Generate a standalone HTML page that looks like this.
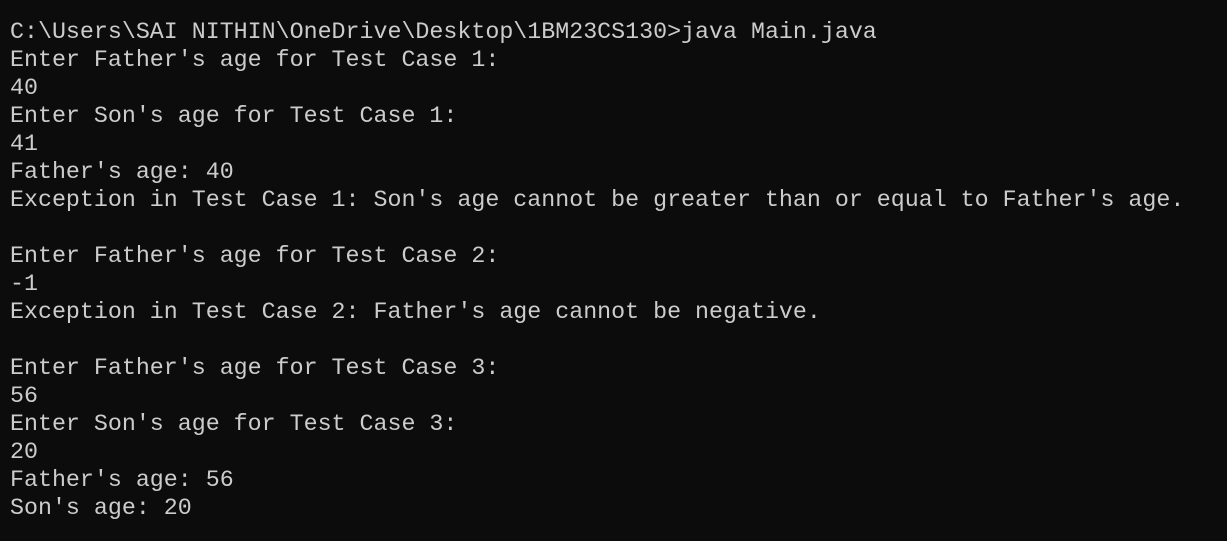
<!DOCTYPE html>
<html><head><meta charset="utf-8"><style>
html,body{margin:0;padding:0;background:#0c0c0c;width:1227px;height:541px;overflow:hidden}
pre{margin:0;position:absolute;left:10px;top:18px;font-family:"Liberation Mono",monospace;font-size:23.3px;line-height:28px;color:#cccccc;white-space:pre}
</style></head><body><pre>C:\Users\SAI NITHIN\OneDrive\Desktop\1BM23CS130>java Main.java
Enter Father's age for Test Case 1:
40
Enter Son's age for Test Case 1:
41
Father's age: 40
Exception in Test Case 1: Son's age cannot be greater than or equal to Father's age.

Enter Father's age for Test Case 2:
-1
Exception in Test Case 2: Father's age cannot be negative.

Enter Father's age for Test Case 3:
56
Enter Son's age for Test Case 3:
20
Father's age: 56
Son's age: 20</pre></body></html>
